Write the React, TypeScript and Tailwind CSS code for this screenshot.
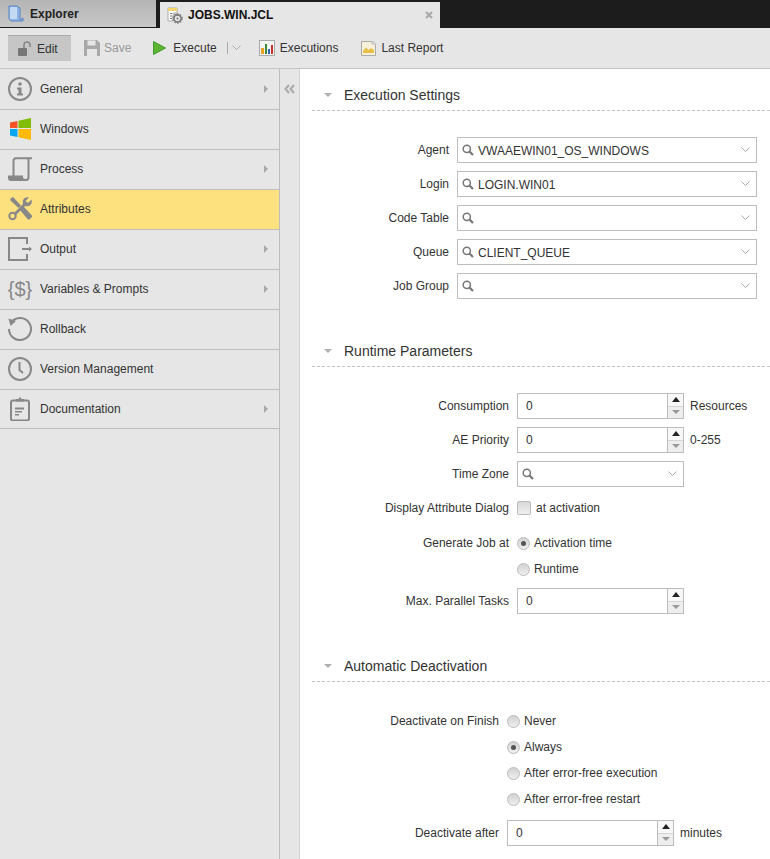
import React from "react";

const C = "#888888";

const Chevron = ({ className = "" }: { className?: string }) => (
  <svg width="9" height="6" viewBox="0 0 9 6" className={className}>
    <path d="M0.5 0.5 L4.5 4.5 L8.5 0.5" fill="none" stroke="#aaa" strokeWidth="1" />
  </svg>
);

const SearchIcon = () => (
  <svg width="12" height="12" viewBox="0 0 12 12" className="shrink-0">
    <circle cx="4.8" cy="4.8" r="3.6" fill="none" stroke="#777" strokeWidth="1.5" />
    <path d="M7.5 7.5 L11 11" stroke="#777" strokeWidth="2.2" />
  </svg>
);

const FolderIcon = () => (
  <svg width="16" height="17" viewBox="0 0 16 17">
    <path d="M1 1 L9 1 L12 3 L12 15 L15 13 L15 16 L3 16 L1 14 Z" fill="#8fb4e3" stroke="#5b86c4" strokeWidth="1" />
    <path d="M2 2 L9 2 L9 14 L2 14 Z" fill="#c4d9f3" />
  </svg>
);

const JobIcon = () => (
  <svg width="16" height="17" viewBox="0 0 16 17">
    <path d="M1 1 H10 V6 H6 V14 H1 Z" fill="#fff" stroke="#aaa" />
    <rect x="1" y="1" width="9" height="3" fill="#f2d56b" />
    <path d="M3 6.5 H5 M3 9 H5 M3 11.5 H5" stroke="#777" />
    <circle cx="10.5" cy="11.5" r="3.6" fill="#e6e6e6" stroke="#777" strokeWidth="1.6" />
    <circle cx="10.5" cy="11.5" r="4.7" fill="none" stroke="#777" strokeWidth="1.2" strokeDasharray="1.4 1.6" />
    <circle cx="10.5" cy="11.5" r="1" fill="#777" />
  </svg>
);

const LockIcon = () => (
  <svg width="16" height="16" viewBox="0 0 16 16">
    <rect x="1" y="7" width="9" height="8" rx="1" fill="#777" />
    <path d="M7 7 V4 a3 3 0 0 1 6 0 V6" fill="none" stroke="#888" strokeWidth="1.6" />
  </svg>
);

const SaveIcon = () => (
  <svg width="16" height="16" viewBox="0 0 16 16">
    <path d="M0 0 H13 L16 3 V16 H0 Z" fill="#a8a8a8" />
    <rect x="3.5" y="0.5" width="8" height="5" fill="#e6e6e6" />
    <rect x="3" y="9" width="10" height="7" fill="#e6e6e6" />
  </svg>
);

const PlayIcon = () => (
  <svg width="13" height="14" viewBox="0 0 13 14">
    <path d="M0.5 0.5 L12.5 7 L0.5 13.5 Z" fill="#5cb531" stroke="#3f9a2a" />
  </svg>
);

const ChartIcon = () => (
  <svg width="16" height="16" viewBox="0 0 16 16">
    <rect x="0.5" y="0.5" width="15" height="15" fill="#f4f4f4" stroke="#aaa" />
    <rect x="2" y="8" width="3" height="6" fill="#e8a020" />
    <rect x="6" y="4" width="2" height="10" fill="#3b8a3a" />
    <rect x="9" y="9" width="2" height="5" fill="#2f62b5" />
    <rect x="12" y="5" width="2" height="9" fill="#c9302c" />
  </svg>
);

const ReportIcon = () => (
  <svg width="15" height="16" viewBox="0 0 15 16">
    <path d="M0.5 1.5 H11 L14.5 4 V15.5 H0.5 Z" fill="#f6f1d8" stroke="#aaa" />
    <path d="M2 11 L5 7.5 L7.5 10 L10 8 L13 10 V13 H2 Z" fill="#e6c04a" />
    <circle cx="12" cy="3" r="2" fill="#ccc" />
  </svg>
);

const InfoIcon = () => (
  <svg width="24" height="24" viewBox="0 0 24 24">
    <circle cx="12" cy="12" r="11" fill="none" stroke={C} strokeWidth="2" />
    <circle cx="12" cy="7" r="1.8" fill={C} />
    <path d="M9 10.5 H13.5 V16.5 H15 V18.5 H9 V16.5 H10.5 V12.5 H9 Z" fill={C} />
  </svg>
);

const WindowsIcon = () => (
  <svg width="24" height="24" viewBox="0 0 24 24">
    <path d="M2 5.5 L9.5 4 V11 H2 Z" fill="#f35325" />
    <path d="M10.5 3.8 L23 1 V11 H10.5 Z" fill="#81bc06" />
    <path d="M2 12 H9.5 V20 L2 18.5 Z" fill="#05a6f0" />
    <path d="M10.5 12 H23 V23 L10.5 20.2 Z" fill="#ffba08" />
  </svg>
);

const ProcessIcon = () => (
  <svg width="24" height="24" viewBox="0 0 24 24">
    <path d="M24 1.2 H8 Q5.5 1.2 5.5 4 V19" fill="none" stroke={C} strokeWidth="2" />
    <path d="M20.5 1.2 V20 Q20.5 23 18 23 H4" fill="none" stroke={C} strokeWidth="2" />
    <path d="M0 18.5 H15 V20 Q15 22 17 22 V24 H3 Q0 24 0 21 Z" fill={C} />
  </svg>
);

const ToolsIcon = () => (
  <svg width="24" height="24" viewBox="0 0 24 24">
    <path d="M3 1 L5 0 L13 8.5 L10.5 11 L2 3 Z" fill={C} />
    <path d="M12 13 L15.5 9.5 L24 18.5 V20 L21.5 22.5 H20 Z" fill={C} />
    <path d="M23.5 2.5 L20 6 L17.5 4 L21 0.5 Q16.5 -0.5 15 3 Q14.5 5.5 15 7 L5.5 16.5 L7.5 18.5 L17 9 Q20 10 22.5 8 Q24.5 6 23.5 2.5 Z" fill={C} />
    <circle cx="4.5" cy="19" r="3.2" fill="#fde17f" stroke={C} strokeWidth="2" />
  </svg>
);

const OutputIcon = () => (
  <svg width="24" height="24" viewBox="0 0 24 24">
    <path d="M19 7 V1 H1 V23 H19 V17" fill="none" stroke={C} strokeWidth="2" />
    <path d="M14 12 H21" stroke={C} strokeWidth="2" />
    <path d="M21 9.5 L24 12 L21 14.5 Z" fill={C} />
  </svg>
);

const RollbackIcon = () => (
  <svg width="24" height="24" viewBox="0 0 24 24">
    <path d="M3.5 5 A11 11 0 1 1 1 12" fill="none" stroke={C} strokeWidth="2" />
    <path d="M0.5 1.5 L8 4 L2.5 9 Z" fill={C} />
  </svg>
);

const ClockIcon = () => (
  <svg width="24" height="24" viewBox="0 0 24 24">
    <circle cx="12" cy="12" r="11" fill="none" stroke={C} strokeWidth="2" />
    <path d="M11.5 5 V13 L15 16" fill="none" stroke={C} strokeWidth="2" />
  </svg>
);

const ClipboardIcon = () => (
  <svg width="24" height="24" viewBox="0 0 24 24">
    <rect x="3" y="3.5" width="18" height="20" rx="2" fill="none" stroke={C} strokeWidth="2" />
    <path d="M8 4 V2.5 H10.5 L12 0.5 L13.5 2.5 H16 V4 Z" fill={C} stroke={C} />
    <path d="M7 10.5 H16 V12.5 H7 Z M7 14 H14 V15.5 H7 Z M7 17 H11 V18.5 H7 Z" fill={C} />
  </svg>
);

const menu: { label: string; icon: React.ReactNode; arrow?: boolean; active?: boolean; last?: boolean }[] = [
  { label: "General", icon: <InfoIcon />, arrow: true },
  { label: "Windows", icon: <WindowsIcon /> },
  { label: "Process", icon: <ProcessIcon />, arrow: true },
  { label: "Attributes", icon: <ToolsIcon />, active: true },
  { label: "Output", icon: <OutputIcon />, arrow: true },
  { label: "Variables & Prompts", icon: <span className="text-[20px] leading-6 text-[#888]">{"{$}"}</span>, arrow: true },
  { label: "Rollback", icon: <RollbackIcon /> },
  { label: "Version Management", icon: <ClockIcon /> },
  { label: "Documentation", icon: <ClipboardIcon />, arrow: true, last: true },
];

const SectionHeader = ({ title }: { title: string }) => (
  <div className="ml-3 h-[42px] border-b border-dashed border-[#c4c4c4] flex items-start pt-[18px]">
    <span className="ml-3 mr-3 w-0 h-0 border-x-4 border-x-transparent border-t-[4px] border-t-[#b0b0b0] mt-[6px]" />
    <span className="text-[14px] leading-4 text-[#333]">{title}</span>
  </div>
);

const Row = ({ labelWidth, label, children, className = "" }: { labelWidth: string; label?: string; children: React.ReactNode; className?: string }) => (
  <div className={`flex items-center h-[26px] ${className}`}>
    <div className={`${labelWidth} mr-2 shrink-0 text-right`}>{label}</div>
    {children}
  </div>
);

const ComboBox = ({ value, width }: { value?: string; width: string }) => (
  <div className={`${width} h-[26px] bg-white border border-[#bdbdbd] flex items-center pl-1 pr-[6px]`}>
    <SearchIcon />
    <span className="ml-1 pt-[2px] flex-1 text-[#333]">{value}</span>
    <Chevron />
  </div>
);

const Spinner = ({ value = "0", unit }: { value?: string; unit?: string }) => (
  <>
    <div className="w-[167px] h-[26px] bg-white border border-[#bdbdbd] flex items-center">
      <span className="flex-1 pl-2 text-[#333]">{value}</span>
      <div className="w-4 h-full border-l border-[#bdbdbd] flex flex-col">
        <div className="flex-1 flex items-center justify-center bg-[#f7f7f7] border-b border-[#d5d5d5]">
          <span className="w-0 h-0 border-x-[4px] border-x-transparent border-b-[5px] border-b-[#222]" />
        </div>
        <div className="flex-1 flex items-center justify-center bg-[#eeeeee]">
          <span className="w-0 h-0 border-x-[4px] border-x-transparent border-t-[4px] border-t-[#999]" />
        </div>
      </div>
    </div>
    {unit && <span className="ml-[6px] text-[#333]">{unit}</span>}
  </>
);

const Radio = ({ label, checked }: { label: string; checked?: boolean }) => (
  <div className="flex items-center">
    <span className="w-[13px] h-[13px] rounded-full border border-[#bbbbbb] bg-gradient-to-b from-[#d2d2d2] to-[#efefef] flex items-center justify-center">
      {checked && <span className="w-[5px] h-[5px] rounded-full bg-[#555]" />}
    </span>
    <span className="ml-1 text-[#333]">{label}</span>
  </div>
);

export default function App() {
  return (
    <div className="w-[770px] h-[859px] overflow-hidden flex flex-col bg-white text-[12px] leading-[14px] text-[#333] font-[Liberation_Sans,Arial,sans-serif]">
      {/* tabs */}
      <div className="h-7 shrink-0 bg-[#1c1c1c] flex items-start">
        <div className="w-[156px] h-[27px] bg-gradient-to-b from-[#b4b4b4] to-[#c8c8c8] flex items-center pl-2">
          <FolderIcon />
          <span className="ml-[6px] font-bold text-[#222]">Explorer</span>
        </div>
        <div className="ml-1 mt-[2px] w-[280px] h-[26px] bg-[#e6e6e6] flex items-center pl-[7px] pr-[7px]">
          <JobIcon />
          <span className="ml-[5px] flex-1 font-bold text-[#111]">JOBS.WIN.JCL</span>
          <svg width="8" height="8" viewBox="0 0 8 8">
            <path d="M1 1 L7 7 M7 1 L1 7" stroke="#aaa" strokeWidth="2.2" />
          </svg>
        </div>
      </div>

      {/* toolbar */}
      <div className="h-[41px] shrink-0 bg-[#e6e6e6] border-b border-[#c4c4c4] flex items-center pl-2">
        <div className="w-[63px] h-[26px] bg-[#c6c6c6] border-t border-[#aaa] flex items-center pl-[9px]">
          <LockIcon />
          <span className="ml-[4px]">Edit</span>
        </div>
        <div className="ml-[13px] flex items-center text-[#999]">
          <SaveIcon />
          <span className="ml-1">Save</span>
        </div>
        <div className="ml-[22px] flex items-center">
          <PlayIcon />
          <span className="ml-[7px]">Execute</span>
          <span className="ml-[10px] h-3 w-px bg-[#aaa]" />
          <Chevron className="ml-[4px]" />
        </div>
        <div className="ml-[18px] flex items-center">
          <ChartIcon />
          <span className="ml-[5px]">Executions</span>
        </div>
        <div className="ml-[23px] flex items-center">
          <ReportIcon />
          <span className="ml-[5px]">Last Report</span>
        </div>
      </div>

      <div className="flex-1 flex min-h-0">
        {/* sidebar */}
        <div className="w-[280px] shrink-0 bg-[#e6e6e6] border-r border-[#bdbdbd] pt-px">
          {menu.map((m) => (
            <div
              key={m.label}
              className={`${m.last ? "h-[39px]" : "h-10"} border-b border-[#bdbdbd] flex items-center pl-2 pr-[11px] pb-px ${m.active ? "bg-[#fde17f]" : ""}`}
            >
              <span className="w-6 h-6 flex items-center justify-center">{m.icon}</span>
              <span className="ml-2 flex-1 text-[#333]">{m.label}</span>
              {m.arrow && <span className="w-0 h-0 border-y-4 border-y-transparent border-l-[4px] border-l-[#aaa]" />}
            </div>
          ))}
        </div>

        {/* collapse strip */}
        <div className="w-5 shrink-0 bg-[#e6e6e6] border-r border-[#d4d4d4] flex justify-center pt-[15px]">
          <svg width="11" height="10" viewBox="0 0 11 10">
            <path d="M5 1 L1.5 5 L5 9 M10 1 L6.5 5 L10 9" fill="none" stroke="#aaa" strokeWidth="2" />
          </svg>
        </div>

        {/* content */}
        <div className="flex-1 min-w-0">
          <SectionHeader title="Execution Settings" />
          <div className="mt-[26px] mb-[26px] flex flex-col gap-2">
            <Row labelWidth="w-[149px]" label="Agent"><ComboBox width="w-[300px]" value="VWAAEWIN01_OS_WINDOWS" /></Row>
            <Row labelWidth="w-[149px]" label="Login"><ComboBox width="w-[300px]" value="LOGIN.WIN01" /></Row>
            <Row labelWidth="w-[149px]" label="Code Table"><ComboBox width="w-[300px]" /></Row>
            <Row labelWidth="w-[149px]" label="Queue"><ComboBox width="w-[300px]" value="CLIENT_QUEUE" /></Row>
            <Row labelWidth="w-[149px]" label="Job Group"><ComboBox width="w-[300px]" /></Row>
          </div>

          <SectionHeader title="Runtime Parameters" />
          <div className="mt-[26px] mb-[26px] flex flex-col">
            <Row labelWidth="w-[209px]" label="Consumption"><Spinner unit="Resources" /></Row>
            <Row labelWidth="w-[209px]" label="AE Priority" className="mt-2"><Spinner unit="0-255" /></Row>
            <Row labelWidth="w-[209px]" label="Time Zone" className="mt-2"><ComboBox width="w-[167px]" /></Row>
            <Row labelWidth="w-[209px]" label="Display Attribute Dialog" className="mt-2">
              <span className="w-[14px] h-[14px] rounded-[2px] border border-[#bbb] bg-gradient-to-b from-[#d8d8d8] to-[#efefef]" />
              <span className="ml-[5px]">at activation</span>
            </Row>
            <Row labelWidth="w-[209px]" label="Generate Job at" className="mt-[9px]"><Radio label="Activation time" checked /></Row>
            <Row labelWidth="w-[209px]"><Radio label="Runtime" /></Row>
            <Row labelWidth="w-[209px]" label="Max. Parallel Tasks" className="mt-[6px]"><Spinner /></Row>
          </div>

          <SectionHeader title="Automatic Deactivation" />
          <div className="mt-[26px] flex flex-col">
            <Row labelWidth="w-[199px]" label="Deactivate on Finish"><Radio label="Never" /></Row>
            <Row labelWidth="w-[199px]"><Radio label="Always" checked /></Row>
            <Row labelWidth="w-[199px]"><Radio label="After error-free execution" /></Row>
            <Row labelWidth="w-[199px]"><Radio label="After error-free restart" /></Row>
            <Row labelWidth="w-[199px]" label="Deactivate after" className="mt-2"><Spinner unit="minutes" /></Row>
          </div>
        </div>
      </div>
    </div>
  );
}
